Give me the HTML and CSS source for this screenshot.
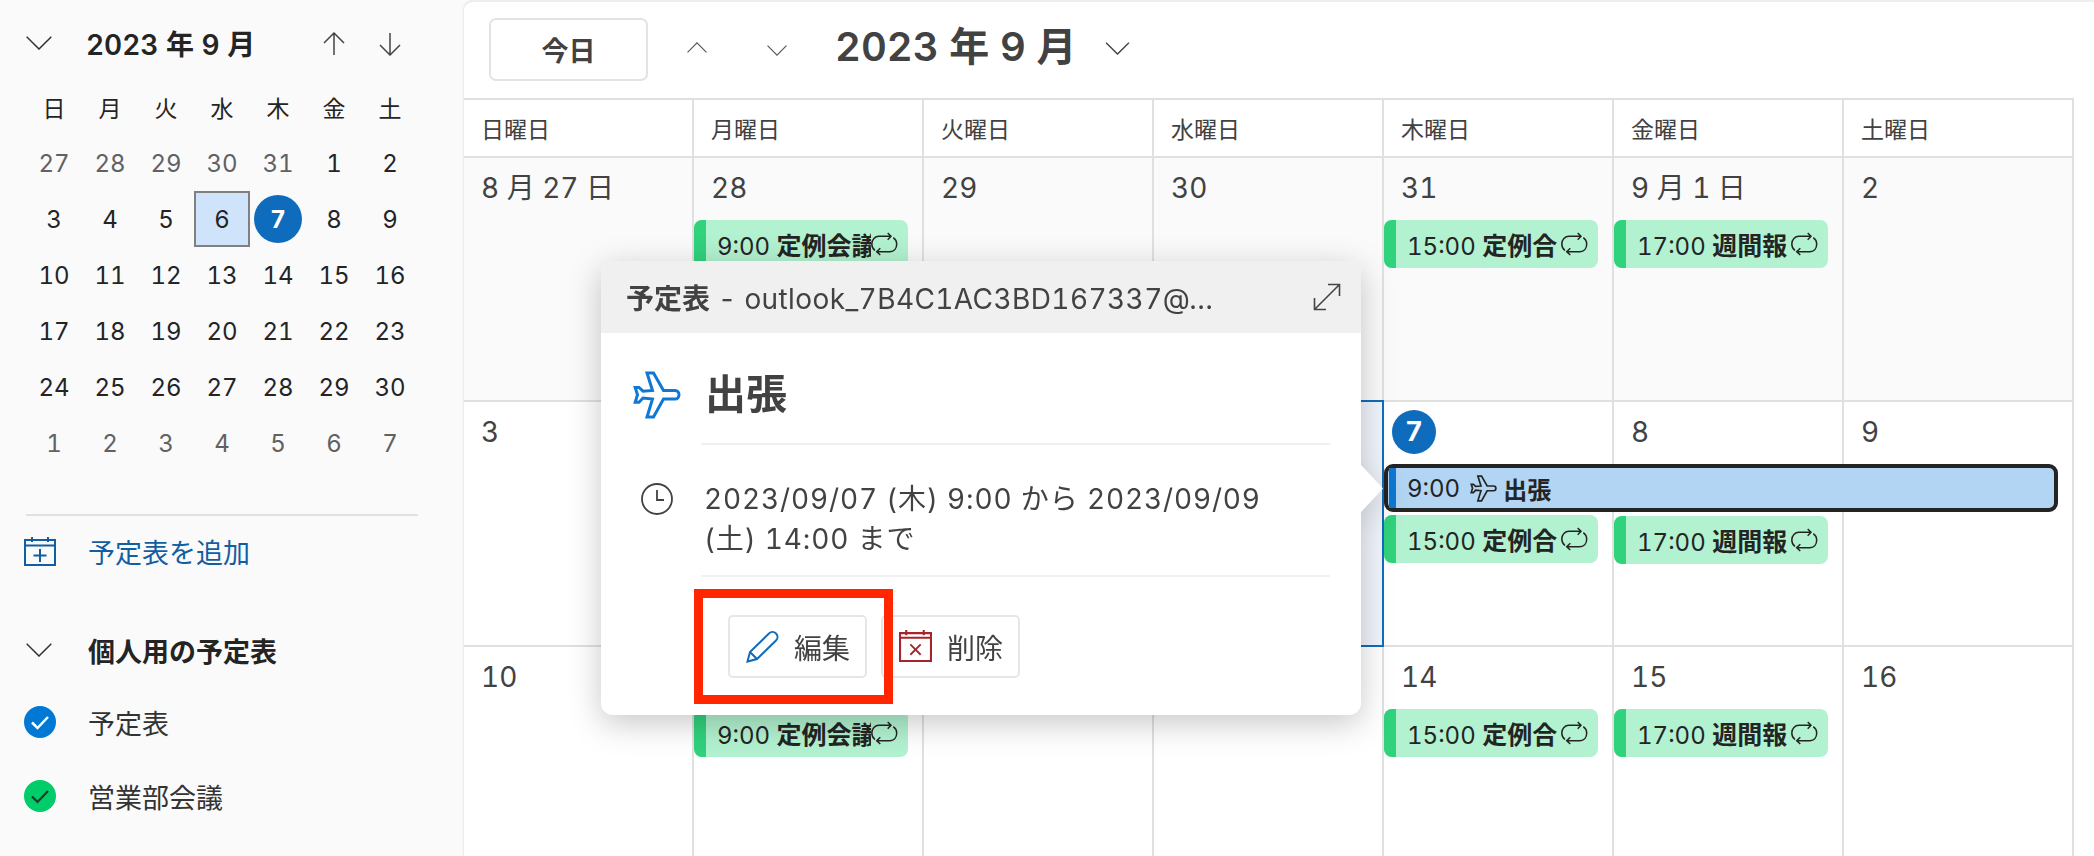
FILE: index.html
```html
<!DOCTYPE html>
<html lang="ja">
<head>
<meta charset="utf-8">
<title>予定表</title>
<link rel="stylesheet" href="styles.css">
</head>
<body>
<svg class="defs" width="0" height="0" aria-hidden="true">
  <symbol id="repeat" viewBox="0 0 28 28"><path d="M16.700 3L20 6.300l-3.300 3.400M20 6.300H8C4 6.300.8 9.500.8 14c0 2.700 1.200 5 3.200 6.500M9.300 18.300L5.700 21.700 9.300 25M5.700 21.700H19c4 0 6.700-3.200 6.700-7.700 0-2.700-1.200-4.700-3.400-6.300" fill="none" stroke="currentColor" stroke-width="1.500"/></symbol>
  <symbol id="plane" viewBox="0 0 48 48"><path d="M14 2h6.500l10 17.500H42c2.500 0 4 2 4 4.200s-1.500 4.300-4 4.300H30.500L20.500 46H14l5.500-18-9.500-1-4 4.300H2.200l2.300-7.600-2.300-7.200H6l4 3.700 9.500-.7z" fill="none" stroke="currentColor" stroke-width="3"/></symbol>
  <symbol id="chev-down" viewBox="0 0 26 14"><path d="M.7.7L13 13 25.300.7" fill="none" stroke="currentColor" stroke-width="1.500"/></symbol>
</svg>

<aside class="sidebar">
  <div class="mini-head">
    <svg class="chev"><use href="#chev-down"/></svg>
    <span class="mini-title">2023 年 9 月</span>
    <svg class="mini-arrow mini-up" viewBox="0 0 24 24"><path d="M12 23V1M2 11L12 1l10 10" fill="none" stroke="currentColor" stroke-width="1.500"/></svg>
    <svg class="mini-arrow mini-down" viewBox="0 0 24 24"><path d="M12 1v22M2 13l10 10 10-10" fill="none" stroke="currentColor" stroke-width="1.500"/></svg>
  </div>
  <div class="mini-grid">
    <span class="wk">日</span><span class="wk">月</span><span class="wk">火</span><span class="wk">水</span><span class="wk">木</span><span class="wk">金</span><span class="wk">土</span>
    <span class="off">27</span><span class="off">28</span><span class="off">29</span><span class="off">30</span><span class="off">31</span><span>1</span><span>2</span>
    <span>3</span><span>4</span><span>5</span><span class="sel">6</span><span class="today"><b>7</b></span><span>8</span><span>9</span>
    <span>10</span><span>11</span><span>12</span><span>13</span><span>14</span><span>15</span><span>16</span>
    <span>17</span><span>18</span><span>19</span><span>20</span><span>21</span><span>22</span><span>23</span>
    <span>24</span><span>25</span><span>26</span><span>27</span><span>28</span><span>29</span><span>30</span>
    <span class="off">1</span><span class="off">2</span><span class="off">3</span><span class="off">4</span><span class="off">5</span><span class="off">6</span><span class="off">7</span>
  </div>
  <div class="side-sec">
    <div class="side-row add-row">
      <svg class="side-ic" viewBox="0 0 32 30"><path d="M1 4h30v25H1zM1 9.500h30M8 1v5M24 1v5M16 13v13M9.500 19.500h13" fill="none" stroke="currentColor" stroke-width="2"/></svg>
      <span>予定表を追加</span>
    </div>
    <div class="side-row group-row">
      <svg class="chev"><use href="#chev-down"/></svg>
      <span>個人用の予定表</span>
    </div>
    <div class="side-row cal-row">
      <span class="check blue"><svg viewBox="0 0 32 32"><path d="M8 16.500l5.500 5.500L24 11" fill="none" stroke="#fff" stroke-width="2.500"/></svg></span>
      <span>予定表</span>
    </div>
    <div class="side-row cal-row">
      <span class="check green"><svg viewBox="0 0 32 32"><path d="M8 16.500l5.500 5.500L24 11" fill="none" stroke="#1f3b2a" stroke-width="2.200"/></svg></span>
      <span>営業部会議</span>
    </div>
  </div>
</aside>

<main class="main">
  <header class="toolbar">
    <button class="today-btn">今日</button>
    <svg class="nav-ic nav-up"><use href="#chev-down"/></svg>
    <svg class="nav-ic nav-down"><use href="#chev-down"/></svg>
    <h1 class="month">2023 年 9 月</h1>
    <svg class="month-chev"><use href="#chev-down"/></svg>
  </header>

  <div class="grid">
    <div class="weekdays">
      <div>日曜日</div><div>月曜日</div><div>火曜日</div><div>水曜日</div><div>木曜日</div><div>金曜日</div><div>土曜日</div>
    </div>

    <div class="week week-past">
      <div class="cell"><div class="num">8 月 27 日</div></div>
      <div class="cell"><div class="num">28</div>
        <div class="event"><i class="bar"></i><span class="ev-text">9:00 <b>定例会議</b></span><svg class="rep"><use href="#repeat"/></svg></div>
      </div>
      <div class="cell"><div class="num">29</div></div>
      <div class="cell"><div class="num">30</div></div>
      <div class="cell"><div class="num">31</div>
        <div class="event"><i class="bar"></i><span class="ev-text">15:00 <b>定例合</b></span><svg class="rep"><use href="#repeat"/></svg></div>
      </div>
      <div class="cell"><div class="num">9 月 1 日</div>
        <div class="event"><i class="bar"></i><span class="ev-text">17:00 <b>週間報</b></span><svg class="rep"><use href="#repeat"/></svg></div>
      </div>
      <div class="cell"><div class="num">2</div></div>
    </div>

    <div class="week">
      <div class="cell"><div class="num">3</div></div>
      <div class="cell"><div class="num">4</div></div>
      <div class="cell"><div class="num">5</div></div>
      <div class="cell cell-sel"><div class="num">6</div></div>
      <div class="cell"><div class="num num-today"><b>7</b></div>
        <div class="event below-span"><i class="bar"></i><span class="ev-text">15:00 <b>定例合</b></span><svg class="rep"><use href="#repeat"/></svg></div>
      </div>
      <div class="cell"><div class="num num-plain">8</div>
        <div class="event below-span"><i class="bar"></i><span class="ev-text">17:00 <b>週間報</b></span><svg class="rep"><use href="#repeat"/></svg></div>
      </div>
      <div class="cell"><div class="num">9</div></div>
      <div class="event-span"><i class="span-bar"></i><span class="ev-text">9:00</span><svg class="span-plane"><use href="#plane"/></svg><b class="ev-text">出張</b></div>
    </div>

    <div class="week">
      <div class="cell"><div class="num">10</div></div>
      <div class="cell"><div class="num">11</div>
        <div class="event"><i class="bar"></i><span class="ev-text">9:00 <b>定例会議</b></span><svg class="rep"><use href="#repeat"/></svg></div>
      </div>
      <div class="cell"><div class="num">12</div></div>
      <div class="cell"><div class="num">13</div></div>
      <div class="cell"><div class="num">14</div>
        <div class="event"><i class="bar"></i><span class="ev-text">15:00 <b>定例合</b></span><svg class="rep"><use href="#repeat"/></svg></div>
      </div>
      <div class="cell"><div class="num">15</div>
        <div class="event"><i class="bar"></i><span class="ev-text">17:00 <b>週間報</b></span><svg class="rep"><use href="#repeat"/></svg></div>
      </div>
      <div class="cell"><div class="num">16</div></div>
    </div>
  </div>
</main>

<section class="popup">
  <i class="pop-arrow"></i>
  <div class="pop-head">
    <span class="pop-cal"><b>予定表</b> - outlook_7B4C1AC3BD167337@…</span>
    <svg class="pop-expand" viewBox="0 0 28 28"><path d="M1.500 26.500L26.500 1.500M15 1.500h11.500V13M1.500 15v11.500H13" fill="none" stroke="currentColor" stroke-width="1.600"/></svg>
  </div>
  <div class="pop-row">
    <svg class="pop-plane"><use href="#plane"/></svg>
    <div class="pop-cell pop-title">出張</div>
  </div>
  <div class="pop-row">
    <svg class="pop-clock" viewBox="0 0 32 32"><circle cx="16" cy="16" r="15" fill="none" stroke="currentColor" stroke-width="1.800"/><path d="M16 7v10h7" fill="none" stroke="currentColor" stroke-width="1.800"/></svg>
    <div class="pop-cell pop-time">2023/09/07 (木) 9:00 から 2023/09/09<br>(土) 14:00 まで</div>
  </div>
  <div class="pop-actions">
    <button class="pop-btn">
      <svg class="btn-ic" viewBox="0 0 33 33"><path d="M1.500 31.500L4 22 23 3.500c2-2 5-2 7 0s2 5 0 7L11 29zM4 22l7 7" fill="none" stroke="#0f6cbd" stroke-width="2"/></svg>
      <span>編集</span>
    </button>
    <button class="pop-btn">
      <svg class="btn-ic" viewBox="0 0 32 32"><path d="M1 3h30v27H1zM1 7.500h30M7 0v5M24 0v5" fill="none" stroke="#a4262c" stroke-width="2"/><path d="M11 14l10 10M21 14L11 24" fill="none" stroke="#a4262c" stroke-width="1.800"/></svg>
      <span>削除</span>
    </button>
  </div>
  <div class="highlight"></div>
</section>
</body>
</html>
```
FILE: styles.css
```css
* { box-sizing: border-box; }
html, body { height: 100%; }
body {
  margin: 0;
  width: 2094px;
  height: 856px;
  overflow: hidden;
  display: flex;
  position: relative;
  background: #fafafa;
  color: #242424;
  font-family: Inter, "Noto Sans CJK JP", sans-serif;
  font-variant-numeric: tabular-nums;
}
.defs { position: absolute; }
button { font: inherit; color: inherit; background: #fff; }

/* sidebar */
.sidebar { width: 464px; flex: none; padding: 15px 0 0 26px; }
.mini-head { display: flex; align-items: center; height: 56px; }
.chev { width: 26px; height: 14px; color: #333; flex: none; }
.mini-title { margin-left: 34px; width: 236px; font-size: 28px; font-weight: 600; white-space: nowrap; }
.mini-arrow { width: 24px; height: 24px; color: #444; flex: none; }
.mini-up { margin-top: 2px; }
.mini-down { margin: 2px 0 0 32px; }
.mini-grid {
  display: grid;
  grid-template-columns: repeat(7, 56px);
  grid-auto-rows: 56px;
  margin-top: 8px;
  font-size: 24px;
}
.mini-grid span { display: flex; align-items: center; justify-content: center; }
.mini-grid .wk { font-size: 23px; }
.mini-grid .off { color: #616161; }
.mini-grid .sel { background: #cfe4fa; border: 2px solid #808080; }
.mini-grid .today b {
  width: 48px; height: 48px; border-radius: 50%;
  display: flex; align-items: center; justify-content: center;
  background: #0f6cbd; color: #fff;
}
.side-sec {
  width: 392px;
  margin-top: 43px;
  border-top: 2px solid #e0e0e0;
}
.side-row { display: flex; align-items: center; font-size: 27px; }
.add-row { height: 70px; color: #115ea3; margin-left: -2px; gap: 32px; }
.side-ic { width: 32px; height: 30px; }
.group-row { height: 70px; margin-top: 29px; font-weight: 700; gap: 36px; }
.cal-row { height: 74px; gap: 32px; margin-left: -2px; color: #333; }
.check { width: 32px; height: 32px; border-radius: 50%; display: block; flex: none; }
.check svg { display: block; width: 32px; height: 32px; }
.check.blue { background: #0078d4; }
.check.green { background: #00cc6a; }

/* main */
.main {
  flex: 1;
  min-width: 0;
  background: #fff;
  border-top: 2px solid #eee;
  border-top-left-radius: 10px;
  box-shadow: -1px 0 2px rgba(0,0,0,.08);
}
.toolbar { height: 96px; display: flex; align-items: center; padding-left: 25px; }
.today-btn {
  width: 159px; height: 63px;
  margin-top: -2px;
  border: 2px solid #e3e3e3; border-radius: 7px;
  font-size: 27px; font-weight: 700; color: #424242;
}
.nav-ic { width: 20px; height: 11px; color: #555; flex: none; }
.nav-up { margin-left: 39px; transform: rotate(180deg); margin-top: -6px; }
.nav-down { margin-left: 60px; margin-top: 0; }
.month {
  margin: -12px 0 0 48px;
  font-size: 40px; font-weight: 600; color: #424242; white-space: nowrap;
}
.month-chev { width: 25px; height: 13px; margin: -4px 0 0 28px; color: #444; flex: none; }

.grid { width: 1610px; border-top: 2px solid #e0e0e0; }
.weekdays { display: grid; grid-template-columns: repeat(7, 230px); height: 58px; border-bottom: 2px solid #e0e0e0; }
.weekdays div {
  border-right: 2px solid #e0e0e0;
  padding-left: 17px;
  font-size: 23px; line-height: 60px; color: #424242;
}
.week { display: grid; grid-template-columns: repeat(7, 230px); height: 245px; position: relative; }
.week-past { height: 244px; background: #fafafa; }
.cell { border-right: 2px solid #e0e0e0; border-bottom: 2px solid #e0e0e0; padding-top: 9px; min-width: 0; }
.cell-sel { background: #f0f4fb; border-color: #0f6cbd; box-shadow: 0 -2px 0 #0f6cbd; }
.num { height: 42px; line-height: 42px; margin-bottom: 11px; padding-left: 17px; font-size: 28px; color: #424242; }
.num-today { padding-left: 8px; }
.num-today b {
  display: flex; align-items: center; justify-content: center;
  width: 44px; height: 44px; margin-top: -1px;
  border-radius: 50%; background: #0f6cbd; color: #fff; font-size: 27px;
}
.event {
  display: flex; align-items: center;
  width: 214px; height: 48px;
  background: #b2f2d0; border-radius: 8px; overflow: hidden;
  font-size: 24px; color: #242424;
}
.event b { font-size: 25px; }
.bar { width: 12px; height: 100%; background: #30d27c; flex: none; }
.ev-text { white-space: nowrap; overflow: hidden; min-width: 0; }
.event .ev-text { margin-left: 11px; }
.rep { width: 28px; height: 28px; flex: none; margin: 0 9px 0 auto; }
.below-span { margin-top: 63px; }
.event-span {
  position: absolute; left: 920px; top: 62px;
  width: 674px; height: 48px;
  display: flex; align-items: center;
  background: #b1d5f2;
  border: 4px solid #242424; border-radius: 9px;
  font-size: 24px;
}
.span-bar { width: 7px; height: 100%; margin-left: 1px; background: #0f78d4; flex: none; }
.event-span span.ev-text { margin-left: 11px; }
.span-plane { width: 27px; height: 27px; margin: 0 6px 0 10px; flex: none; }

/* popup */
.popup {
  position: absolute; left: 601px; top: 261px;
  width: 760px; height: 454px;
  background: #fff; border-radius: 12px;
  filter: drop-shadow(0 8px 16px rgba(0,0,0,.22));
  color: #424242;
}
.pop-arrow {
  position: absolute; left: 760px; top: 204px;
  width: 22px; height: 47px;
  background: #fff;
  clip-path: polygon(0 0, 100% 50%, 0 100%);
}
.pop-head {
  height: 72px;
  display: flex; align-items: center; justify-content: space-between;
  padding: 0 20px 0 25px;
  background: #f0f0f0; border-radius: 12px 12px 0 0;
  font-size: 28px; letter-spacing: .4px;
}
.pop-cal { white-space: nowrap; }
.pop-cal b { letter-spacing: 0; }
.pop-expand { width: 28px; height: 28px; color: #444; }
.pop-row { display: flex; margin-right: 31px; }
.pop-plane { width: 48px; height: 48px; margin: 38px 20px 0 32px; color: #0f78d4; flex: none; }
.pop-cell { flex: 1; border-bottom: 2px solid #f0f0f0; }
.pop-title { height: 112px; padding: 34px 0 0 4px; font-size: 41px; font-weight: 700; line-height: 54px; }
.pop-clock { width: 32px; height: 32px; margin: 38px 28px 0 40px; color: #424242; flex: none; }
.pop-time { padding: 34px 0 16px 3px; font-size: 28px; line-height: 40px; letter-spacing: .85px; white-space: nowrap; }
.pop-actions { display: flex; gap: 14px; margin: 38px 0 0 127px; }
.pop-btn {
  width: 139px; height: 63px;
  display: flex; align-items: center; gap: 15px;
  padding: 0 0 0 16px;
  border: 2px solid #e6e6e6; border-radius: 5px;
  font-size: 28px; color: #424242;
}
.btn-ic { width: 33px; height: 33px; flex: none; }
.highlight {
  position: absolute; left: 93px; top: 328px;
  width: 199px; height: 115px;
  border: 9px solid #ff2600;
}
```
